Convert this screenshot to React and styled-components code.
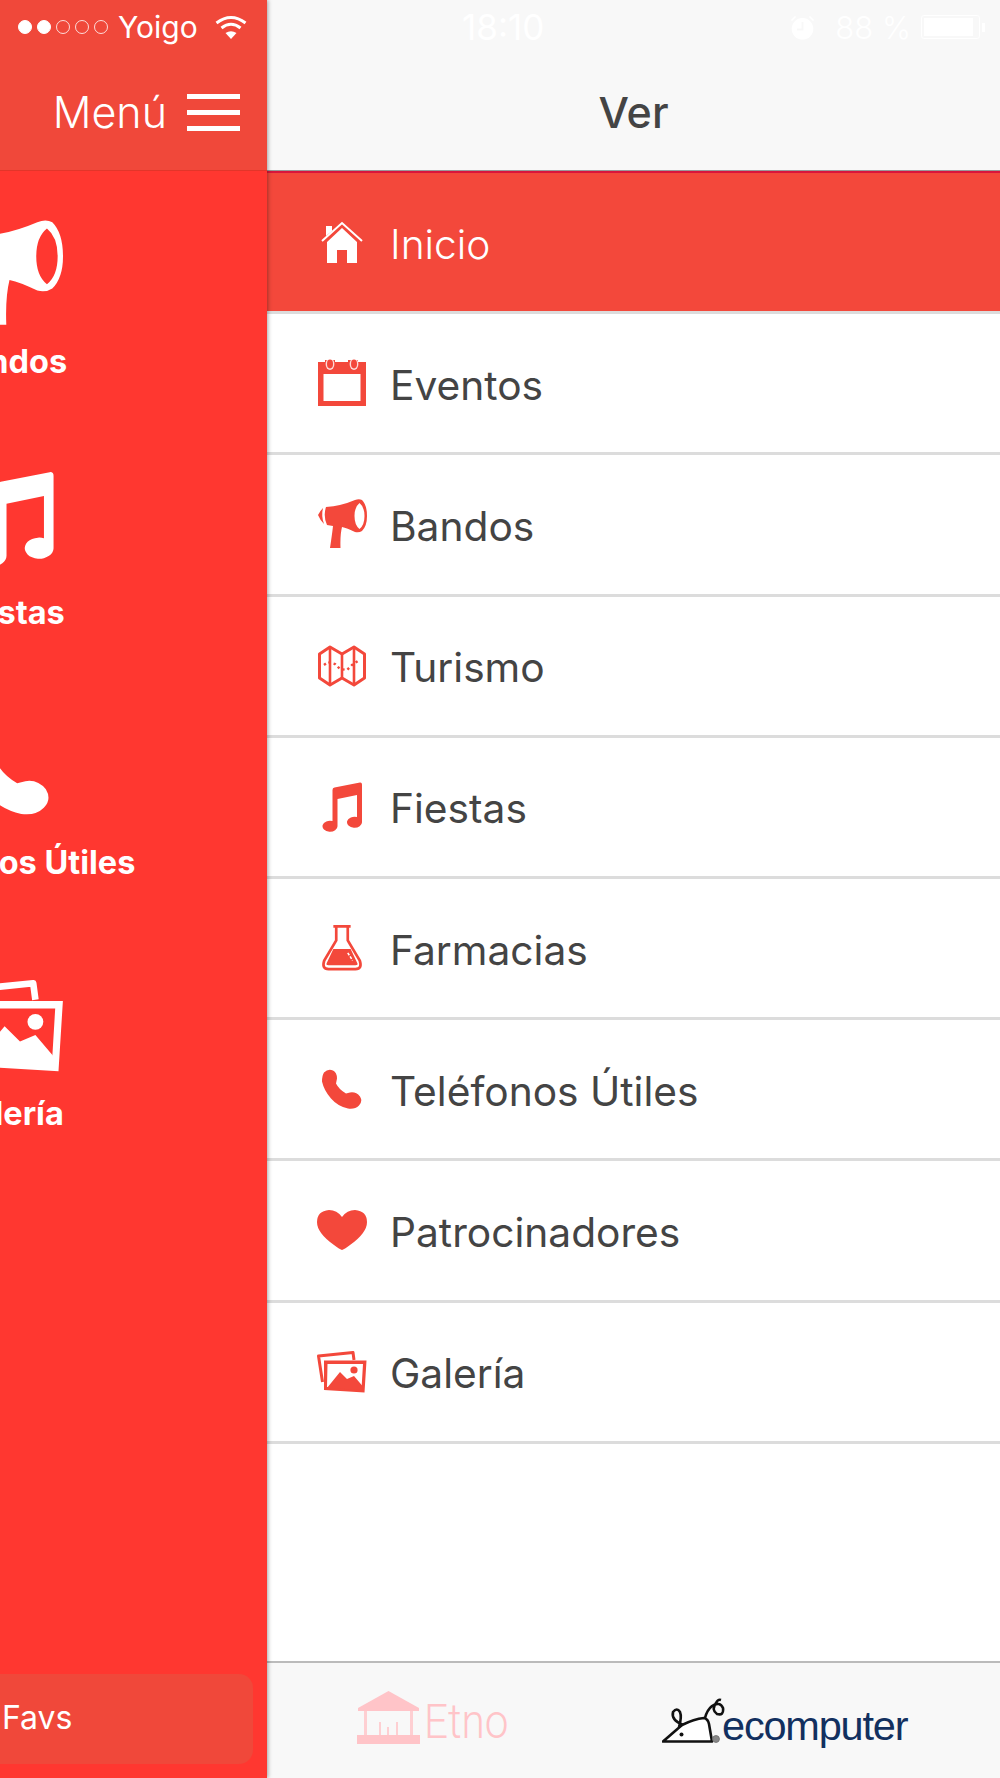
import React from 'react';
import styled, { createGlobalStyle } from 'styled-components';

const GlobalStyle = createGlobalStyle`
  html, body {
    margin: 0;
    padding: 0;
    background: #fff;
    font-family: Inter, "Liberation Sans", sans-serif;
  }
`;

const HomeIcon = ({ size }) => (
  <svg width={size} height={size} viewBox="0 0 42 42" fill="currentColor">
    <path d="M1 20 L21 2 L41 20" fill="none" stroke="currentColor" strokeWidth="2" />
    <path d="M5 5 H11 V10 L5 15 Z" />
    <path d="M6 21 L21 7 L36 21 V42 H26 V29 H16 V42 H6 Z" />
  </svg>
);

const CalendarIcon = ({ size }) => (
  <svg width={size} height={size} viewBox="0 0 50 50" fill="currentColor">
    <path
      fillRule="evenodd"
      d="M1 4 H8 V2 H18 V4 H31 V2 H41 V4 H49 V48 H1 Z M6.5 16 V43 H43.5 V16 Z"
    />
    <ellipse cx="13" cy="6" rx="4.4" ry="6" fill="#fff" opacity="0.8" />
    <ellipse cx="37" cy="6" rx="4.4" ry="6" fill="#fff" opacity="0.8" />
    <ellipse cx="13" cy="6" rx="3" ry="4.4" />
    <ellipse cx="37" cy="6" rx="3" ry="4.4" />
  </svg>
);

const MegaphoneIcon = ({ size }) => (
  <svg width={size} height={size} viewBox="0 0 50 50" fill="currentColor">
    <path
      fillRule="evenodd"
      d="M9 8 Q24 7 38 1 Q42 -0.5 45 1 Q50 6 50 17 Q50 27 45 32 Q42 34 38 33 Q30 29 25 28 Q23 36 23.5 49 H13 Q15 36 16 27 L10 26 Q6 17 9 8 Z M42.5 4 Q37.5 8 37.5 17 Q37.5 26 42.5 30 Q47.5 26 47.5 17 Q47.5 8 42.5 4 Z"
    />
    <path d="M6 9 Q3 12 1 16 Q3 21 7 25 Q4 17 6 9 Z" />
  </svg>
);

const MapIcon = ({ size }) => (
  <svg width={size} height={size * 0.875} viewBox="0 0 48 42" fill="none" stroke="currentColor">
    <path d="M1.5 9 L12 2 L24 9 L36 2 L46.5 9 V33 L36 40 L24 33 L12 40 L1.5 33 Z" strokeWidth="3" strokeLinejoin="round" />
    <path d="M12 2 V40 M24 9 V33 M36 2 V40" strokeWidth="2.6" />
    <path d="M6 20 L10 17 L17 19 L22 24 L29 25 L34 20 L40 16" strokeWidth="2.4" strokeDasharray="2.4 3" />
  </svg>
);

const MusicIcon = ({ size }) => (
  <svg width={size * 0.92} height={size} viewBox="0 0 46 50" fill="currentColor">
    <path d="M13.5 8 Q13.5 6 15.5 5.6 L41 0.6 Q43 0.4 43 2.5 L43 40 A7.5 5.5 0 1 1 38 35 L38 13 L18.5 17 L18.5 44 A7.5 5.5 0 1 1 13.5 39 Z" />
  </svg>
);

const FlaskIcon = ({ size }) => (
  <svg width={size} height={size} viewBox="0 0 44 50" fill="currentColor">
    <path
      d="M13 2.5 H31 M16 2.5 V17 L3.5 38 Q0.5 47 8 47 H36 Q43.5 47 40.5 38 L28 17 V2.5"
      fill="none"
      stroke="currentColor"
      strokeWidth="2.8"
    />
    <path d="M13 26 H31 L38 41 Q39 43 36 43 H8 Q5 43 6 41 Z" />
    <path d="M28 30 L33 38" stroke="#fff" strokeWidth="1.6" strokeDasharray="3 1.5" />
  </svg>
);

const PhoneIcon = ({ size }) => (
  <svg width={size} height={size} viewBox="0 0 41 40" fill="currentColor">
    <path d="M2 3 Q6 -1 11 1 Q15 3 15 9 L14 14 Q17 20 24 24 L28 23 Q34 22 38 27 Q41 32 37 36 Q33 40 26 39 Q16 37 9 29 Q2 21 0 12 Q0 6 2 3 Z" />
  </svg>
);

const HeartIcon = ({ size }) => (
  <svg width={size} height={size * 0.8} viewBox="0 0 50 40" fill="currentColor">
    <path d="M25 40 Q22 39 17 35 Q0 23 0 12 Q0 1 12 0 Q20 0 25 7 Q30 0 38 0 Q50 1 50 12 Q50 23 33 35 Q28 39 25 40 Z" />
  </svg>
);

const GalleryIcon = ({ size }) => (
  <svg width={size} height={size * 0.84} viewBox="0 0 50 42" fill="currentColor">
    <path d="M5.5 31 L1.5 5 L36 1.5 L37 9" fill="none" stroke="currentColor" strokeWidth="3" strokeLinejoin="round" />
    <path
      fillRule="evenodd"
      d="M7 9.5 H49.5 L47.5 41.5 L7 39 Z M10.5 13 L10 36 L44.5 38 L46 13 Z"
    />
    <path d="M10 37 L23 21 L30 28 L37 25 L45.5 35 L45 39 Z" />
    <circle cx="37" cy="19" r="3.6" />
  </svg>
);

const WifiIcon = () => (
  <svg width="32" height="25" viewBox="0 0 32 25" fill="none" stroke="currentColor" strokeWidth="3">
    <path d="M1.5 8 Q16 -3 30.5 8" />
    <path d="M6.5 13 Q16 5.5 25.5 13" />
    <path d="M16 24 L10.5 18 Q16 14.5 21.5 18 Z" fill="currentColor" stroke="none" />
  </svg>
);

const AlarmIcon = () => (
  <svg width="25" height="25" viewBox="0 0 25 25" fill="currentColor">
    <path
      fillRule="evenodd"
      d="M12.5 3 A10.8 10.8 0 1 0 12.5 24.6 A10.8 10.8 0 1 0 12.5 3 Z M11.5 7 H13.5 V15.5 H7 V13.5 H11.5 Z"
    />
    <path d="M1 5 L5 1 L6 2 L2 6 Z M24 5 L20 1 L19 2 L23 6 Z" />
  </svg>
);

const TempleLogo = () => (
  <svg width="63" height="53" viewBox="0 0 63 53" fill="#ffc4c8">
    <path d="M31.5 0 L62 17 V20 H1 V17 Z" />
    <path d="M7 20 H10 V44 H7 Z M53 20 H56 V44 H53 Z M22 31 H24 V44 H22 Z M39 31 H41 V44 H39 Z M30 36 H32 V44 H30 Z" opacity="0.8" />
    <path d="M0 44 H63 V53 H0 Z" />
  </svg>
);

const MouseLogo = () => (
  <svg width="64" height="46" viewBox="0 0 64 46" fill="none" stroke="#111" strokeWidth="2.6">
    <path d="M1 43.5 L20 27 Q32 21 42 20 Q46 21 47 26 L50 43.5 Z" fill="#fff" strokeLinejoin="round" />
    <circle cx="19.5" cy="36.5" r="2" fill="#111" stroke="none" />
    <path d="M21 27 Q9 22 11 14 Q15 9 18 14 Q20 19 17 29" />
    <path d="M43 20 Q45 12 50 8 Q58 3 61 10 Q62 18 55 16 Q49 12 54 5 Q56 1 59 2" />
    <circle cx="54" cy="41" r="3.4" fill="#888" stroke="#777" strokeWidth="1" />
  </svg>
);

const SIDE_ITEMS = [
  { label: 'Bandos', Icon: MegaphoneIcon, size: 107, shift: 4, top: 0 },
  { label: 'Fiestas', Icon: MusicIcon, size: 96, shift: 16, top: 0 },
  { label: 'Teléfonos Útiles', Icon: PhoneIcon, size: 84, shift: 4, top: 12 },
  { label: 'Galería', Icon: GalleryIcon, size: 110, shift: 2, top: 8 },
];

const ROWS = [
  { label: 'Inicio', Icon: HomeIcon, size: 42, active: true },
  { label: 'Eventos', Icon: CalendarIcon, size: 50 },
  { label: 'Bandos', Icon: MegaphoneIcon, size: 50 },
  { label: 'Turismo', Icon: MapIcon, size: 48 },
  { label: 'Fiestas', Icon: MusicIcon, size: 50 },
  { label: 'Farmacias', Icon: FlaskIcon, size: 48 },
  { label: 'Teléfonos Útiles', Icon: PhoneIcon, size: 41 },
  { label: 'Patrocinadores', Icon: HeartIcon, size: 50 },
  { label: 'Galería', Icon: GalleryIcon, size: 50 },
];

export default function App() {
  return (
    <Screen>
      <GlobalStyle />
      <Sidebar>
        <SideHeader>
          <StatusBar>
            <Signal>
              <Dot $on />
              <Dot $on />
              <Dot />
              <Dot />
              <Dot />
            </Signal>
            <Carrier>Yoigo</Carrier>
            <WifiIcon />
          </StatusBar>
          <MenuRow>
            <MenuLabel>Menú</MenuLabel>
            <Burger>
              <span />
              <span />
              <span />
            </Burger>
          </MenuRow>
        </SideHeader>
        <SideBody>
          <SideList>
            {SIDE_ITEMS.map(({ label, Icon, size, shift, top }) => (
              <SideItem key={label}>
                <SideIcon $shift={shift} $top={top}>
                  <Icon size={size} />
                </SideIcon>
                <SideLabel>{label}</SideLabel>
              </SideItem>
            ))}
          </SideList>
          <FavsButton>Favs</FavsButton>
        </SideBody>
      </Sidebar>

      <Main>
        <MainHeader>
          <MainStatus>
            <Time>18:10</Time>
            <MainStatusRight>
              <AlarmIcon />
              <Percent>88 %</Percent>
              <Battery>
                <BatteryFill />
              </Battery>
              <BatteryTip />
            </MainStatusRight>
          </MainStatus>
          <Title>Ver</Title>
        </MainHeader>
        <List>
          {ROWS.map(({ label, Icon, size, active }) => (
            <Row key={label} $active={active}>
              <RowIcon>
                <Icon size={size} />
              </RowIcon>
              <RowLabel $active={active}>{label}</RowLabel>
            </Row>
          ))}
        </List>
        <Footer>
          <Logo>
            <TempleLogo />
            <EtnoText>Etno</EtnoText>
          </Logo>
          <Logo>
            <MouseLogo />
            <EcomputerText>ecomputer</EcomputerText>
          </Logo>
        </Footer>
      </Main>
    </Screen>
  );
}

const Screen = styled.div`
  display: flex;
  width: 1000px;
  height: 1778px;
  overflow: hidden;
`;

const Sidebar = styled.aside`
  display: flex;
  flex-direction: column;
  flex: 0 0 267px;
  background: #ff3730;
  box-shadow: 1px 0 4px rgba(0, 0, 0, 0.35);
  position: relative;
  z-index: 1;
  overflow: hidden;
`;

const SideHeader = styled.div`
  height: 171px;
  box-sizing: border-box;
  background: #f0483a;
  border-bottom: 1px solid #e2352a;
  color: #fff;
`;

const StatusBar = styled.div`
  display: flex;
  align-items: center;
  height: 54px;
  padding-left: 18px;
`;

const Signal = styled.div`
  display: flex;
  gap: 5px;
`;

const Dot = styled.span`
  width: 14px;
  height: 14px;
  box-sizing: border-box;
  border-radius: 50%;
  border: 1.5px solid #fff;
  background: ${({ $on }) => ($on ? '#fff' : 'transparent')};
  opacity: ${({ $on }) => ($on ? 1 : 0.8)};
`;

const Carrier = styled.span`
  font-size: 30px;
  font-weight: 400;
  margin: 0 17px 0 10px;
`;

const MenuRow = styled.div`
  display: flex;
  justify-content: flex-end;
  align-items: center;
  height: 116px;
  padding-right: 27px;
  gap: 20px;
`;

const MenuLabel = styled.span`
  font-size: 43px;
  font-weight: 300;
`;

const Burger = styled.div`
  display: flex;
  flex-direction: column;
  gap: 11px;
  width: 53px;

  span {
    height: 5px;
    background: #fff;
  }
`;

const SideBody = styled.div`
  flex: 1;
  display: flex;
  flex-direction: column;
  justify-content: space-between;
`;

const SideList = styled.div`
  width: 267px;
  margin-left: -126px;
  padding-top: 49px;
`;

const SideItem = styled.div`
  display: flex;
  flex-direction: column;
  align-items: center;
  height: 250.6px;
`;

const SideIcon = styled.div`
  display: flex;
  justify-content: center;
  align-items: flex-start;
  color: #fff;
  height: 107px;
  padding-top: ${({ $top }) => $top}px;
  box-sizing: border-box;
  margin-left: ${({ $shift }) => $shift}px;
`;

const SideLabel = styled.div`
  margin-top: 17px;
  font-size: 32.5px;
  font-weight: 700;
  line-height: 36px;
  color: #fff;
  white-space: nowrap;
`;

const FavsButton = styled.div`
  box-sizing: border-box;
  width: 273px;
  height: 90px;
  margin: 0 0 14px -20px;
  padding-left: 22px;
  border-radius: 14px;
  background: #f0483a;
  color: #fff;
  font-size: 32px;
  line-height: 88px;
`;

const Main = styled.main`
  flex: 1;
  display: flex;
  flex-direction: column;
  min-width: 0;
`;

const MainHeader = styled.div`
  height: 173px;
  box-sizing: border-box;
  background: #f8f8f8;
  border-bottom: 2px solid #d8163c;
  box-shadow: inset 0 -1px 0 #999;
`;

const MainStatus = styled.div`
  display: flex;
  align-items: center;
  height: 54px;
  color: #fff;
  padding-left: 195px;
`;

const Time = styled.span`
  font-size: 35px;
  font-weight: 400;
`;

const MainStatusRight = styled.div`
  display: flex;
  align-items: center;
  margin-left: auto;
  margin-right: 15px;
`;

const Percent = styled.span`
  font-size: 31px;
  margin: 0 10px 0 20px;
  font-weight: 300;
`;

const Battery = styled.div`
  width: 59px;
  height: 24px;
  box-sizing: border-box;
  padding: 2px 6px 2px 2px;
  border: 1.5px solid #fff;
  border-radius: 3px;
`;

const BatteryFill = styled.div`
  height: 100%;
  background: #fff;
`;

const BatteryTip = styled.span`
  width: 3px;
  height: 9px;
  margin-left: 2px;
  background: #fff;
`;

const Title = styled.div`
  height: 116px;
  line-height: 116px;
  text-align: center;
  font-size: 43px;
  font-weight: 500;
  color: #444;
`;

const List = styled.div`
  flex: 1;
  background: #fff;
`;

const Row = styled.div`
  display: flex;
  align-items: center;
  box-sizing: border-box;
  height: 141.2px;
  padding-left: 50px;
  border-bottom: 3px solid #dcdcdc;
  background: ${({ $active }) => ($active ? '#f3483b' : '#fff')};
  color: ${({ $active }) => ($active ? '#fff' : '#f3483b')};
`;

const RowIcon = styled.div`
  display: flex;
  justify-content: center;
  align-items: center;
  width: 50px;
  margin-right: 23px;
`;

const RowLabel = styled.span`
  padding-top: 4px;
  font-size: 40.7px;
  font-weight: ${({ $active }) => ($active ? 300 : 400)};
  color: ${({ $active }) => ($active ? '#fff' : '#444')};
`;

const Footer = styled.footer`
  display: flex;
  align-items: flex-end;
  gap: 156px;
  box-sizing: border-box;
  height: 117px;
  padding: 0 0 34px 90px;
  background: #f8f8f8;
  border-top: 2px solid #bbb;
`;

const Logo = styled.div`
  display: flex;
  align-items: flex-end;
`;

const EtnoText = styled.span`
  display: inline-block;
  width: 82px;
  margin-left: 4px;
  font-family: Roboto, "Liberation Sans", sans-serif;
  font-size: 48px;
  font-weight: 300;
  line-height: 44px;
  color: #ffc4c8;
  transform: scaleX(0.88);
  transform-origin: left center;
  white-space: nowrap;
`;

const EcomputerText = styled.span`
  margin-left: -4px;
  font-family: "Liberation Sans", Arial, sans-serif;
  font-size: 41.5px;
  line-height: 36px;
  letter-spacing: -1.2px;
  color: #12305f;
`;
